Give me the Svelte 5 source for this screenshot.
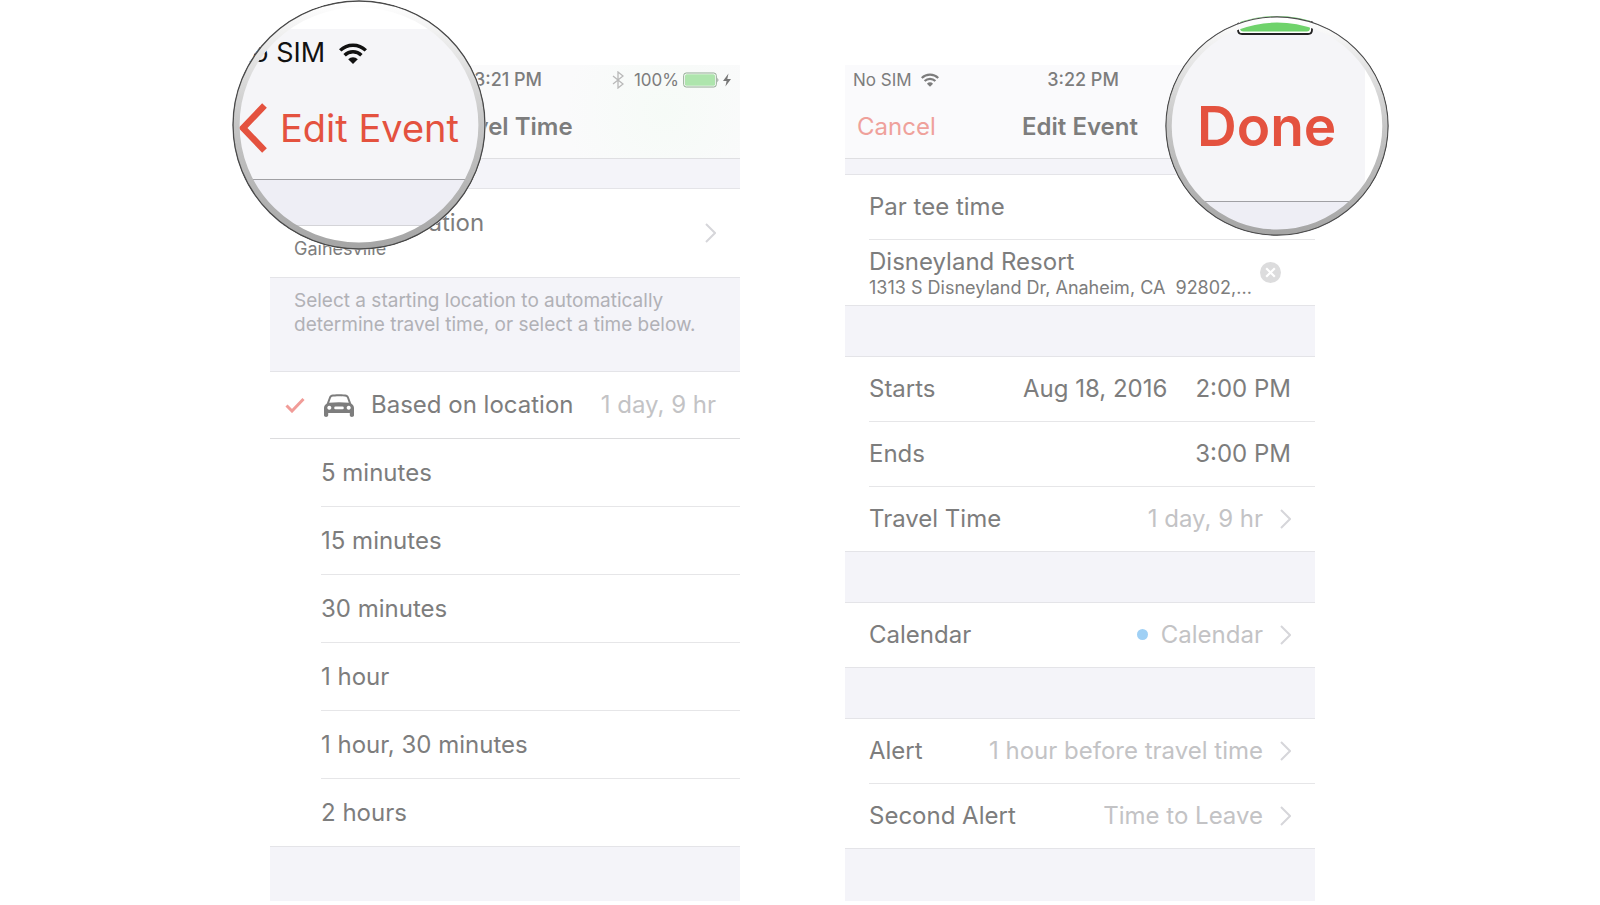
<script lang="ts">
	const durations = [
		'5 minutes',
		'15 minutes',
		'30 minutes',
		'1 hour',
		'1 hour, 30 minutes',
		'2 hours'
	];

	const alerts = [
		{ label: 'Alert', value: '1 hour before travel time' },
		{ label: 'Second Alert', value: 'Time to Leave' }
	];

	let travelTime = 'location';
	let title = 'Par tee time';
</script>

{#snippet chevron()}
	<svg class="chevron" viewBox="0 0 11 20" aria-hidden="true">
		<path d="M1 1l9 9-9 9" fill="none" stroke="currentColor" stroke-width="2" />
	</svg>
{/snippet}

{#snippet wifi()}
	<svg class="wifi" viewBox="0 0 28 21" aria-hidden="true">
		<g fill="none" stroke="currentColor" stroke-width="3.4">
			<path d="M1.2 7.4a18.4 18.4 0 0 1 25.6 0" />
			<path d="M5.6 12.2a12 12 0 0 1 16.8 0" />
		</g>
		<path d="M9.2 16.2a7 7 0 0 1 9.6 0L14 21z" fill="currentColor" />
	</svg>
{/snippet}

{#snippet tick()}
	<svg class="tick" viewBox="0 0 20 16" aria-hidden="true">
		<path d="M1.5 8.5l5.5 5.5L18.5 2" fill="none" stroke="currentColor" stroke-width="3" />
	</svg>
{/snippet}

{#snippet ring(id: string)}
	<svg class="ring" viewBox="0 0 250 250" preserveAspectRatio="none" aria-hidden="true">
		<defs>
			<linearGradient {id} x1="0" y1="0" x2="0" y2="1">
				<stop offset="0" stop-color="#fff" />
				<stop offset="0.15" stop-color="#ececec" />
				<stop offset="0.5" stop-color="#c6c6c6" />
				<stop offset="1" stop-color="#a6a6a6" />
			</linearGradient>
		</defs>
		<ellipse cx="125" cy="125" rx="121" ry="121" fill="none" stroke="url(#{id})" stroke-width="7" />
		<ellipse cx="125" cy="125" rx="124" ry="124" fill="none" stroke="#4a4a4a" stroke-width="1.3" />
	</svg>
{/snippet}

<main class="stage">
	<section class="phone" aria-label="Travel Time">
		<header class="tinted">
			<div class="status">
				<span class="time">3:21 PM</span>
				<span class="battery">
					<svg class="bluetooth" viewBox="0 0 12 18" aria-hidden="true">
						<path
							d="M1 5l10 8-5 4V1l5 4-10 8"
							fill="none"
							stroke="currentColor"
							stroke-width="1.3"
						/>
					</svg>
					<span>100%</span>
					<svg class="cell" viewBox="0 0 49 16" aria-hidden="true">
						<rect x="0.7" y="1" width="32.6" height="14" rx="2.5" fill="#fff" stroke="#8fa890" stroke-width="1" />
						<rect x="2" y="2.3" width="30" height="11.4" rx="1.5" fill="#aee5ad" />
						<path d="M34.5 5.5q1.8 2.5 0 5z" fill="#777" />
						<path d="M45.5 1.5L40 9h3.6l-1.2 5.5L48 7h-3.7z" fill="#777" />
					</svg>
				</span>
			</div>
			<div class="nav">
				<h1>Travel Time</h1>
			</div>
		</header>

		<div class="gap short"></div>
		<button class="row place">
			<span class="lines">
				<span>Current Location</span>
				<small>Gainesville</small>
			</span>
			{@render chevron()}
		</button>

		<p class="gap note">
			Select a starting location to automatically determine travel time, or select a time below.
		</p>

		<div class="options" role="radiogroup" aria-label="Travel time">
			<label class="option based">
				<input type="radio" name="travel" value="location" bind:group={travelTime} />
				<span class="mark">{@render tick()}</span>
				<span class="choice">
					<svg class="car" viewBox="0 0 30 23" aria-hidden="true">
						<path
							fill="currentColor"
							fill-rule="evenodd"
							d="M7.5.8C10 0 20 0 22.500.8c1.300.4 2 1.400 2.500 2.700l2.200 6C29 10.800 30 12 30 14v7.200c0 2.300-4.200 2.300-4.200 0V19H4.200v2.200c0 2.300-4.200 2.300-4.200 0V14c0-2 1-3.200 2.800-4.500l2.200-6C5.500 2.200 6.200 1.200 7.500.8zM8 2.800c-.6.2-.9.700-1.200 1.500L5.200 8.800c6-.9 13.600-.9 19.600 0l-1.600-4.500c-.3-.8-.6-1.300-1.200-1.500-3-.7-11-.7-14 0zM5.300 11.800a2 2 0 1 0 .01 0zM24.700 11.800a2 2 0 1 0 .01 0zM11.500 12.600a1.200 1.200 0 0 0 0 2.600h7a1.200 1.200 0 0 0 0-2.600z"
						/>
					</svg>
					<span class="name">Based on location</span>
					<span class="value">1 day, 9 hr</span>
				</span>
			</label>
			{#each durations as duration}
				<label class="option">
					<input type="radio" name="travel" value={duration} bind:group={travelTime} />
					<span class="mark">{@render tick()}</span>
					<span class="choice">{duration}</span>
				</label>
			{/each}
		</div>
		<div class="gap rest"></div>

		<div class="lens lens-back">
			<div class="lens-bar">
				<div class="lens-status">No SIM {@render wifi()}</div>
				<button class="back">
					<svg viewBox="0 0 28 50" aria-hidden="true">
						<path d="M25.500 2.500L4 25l21.500 22.500" fill="none" stroke="currentColor" stroke-width="6.500" />
					</svg>
					Edit Event
				</button>
			</div>
			<div class="lens-gap"></div>
			{@render ring('ring-back')}
		</div>
	</section>

	<section class="phone" aria-label="Edit Event">
		<header>
			<div class="status">
				<span class="carrier">No SIM {@render wifi()}</span>
				<span class="time">3:22 PM</span>
			</div>
			<div class="nav">
				<button class="cancel">Cancel</button>
				<h1>Edit Event</h1>
			</div>
		</header>

		<div class="gap thin"></div>
		<div class="group">
			<div class="row">
				<input class="title" type="text" aria-label="Title" bind:value={title} />
			</div>
			<div class="row address">
				<span class="lines">
					<span>Disneyland Resort</span>
					<small>1313 S Disneyland Dr, Anaheim, CA&nbsp; 92802,...</small>
				</span>
				<button class="clear" aria-label="Clear location">
					<svg viewBox="0 0 21 21" aria-hidden="true">
						<circle cx="10.500" cy="10.500" r="10.500" fill="#dcdcdd" />
						<path d="M6.200 6.200l8.600 8.600m0-8.600l-8.600 8.600" stroke="#fff" stroke-width="2.200" />
					</svg>
				</button>
			</div>
		</div>

		<div class="gap"></div>
		<div class="group">
			<button class="row">
				<span class="name">Starts</span>
				<span class="date">Aug 18, 2016</span>
				<span>2:00 PM</span>
			</button>
			<button class="row">
				<span class="name">Ends</span>
				<span>3:00 PM</span>
			</button>
			<button class="row">
				<span class="name">Travel Time</span>
				<span class="value">1 day, 9 hr</span>
				{@render chevron()}
			</button>
		</div>

		<div class="gap"></div>
		<div class="group">
			<button class="row">
				<span class="name">Calendar</span>
				<span class="value"><i class="dot"></i>Calendar</span>
				{@render chevron()}
			</button>
		</div>

		<div class="gap"></div>
		<div class="group">
			{#each alerts as alert}
				<button class="row">
					<span class="name">{alert.label}</span>
					<span class="value">{alert.value}</span>
					{@render chevron()}
				</button>
			{/each}
		</div>
		<div class="gap rest"></div>

		<div class="lens lens-done">
			<div class="lens-bar">
				<svg class="lens-battery" viewBox="0 0 76 20" aria-hidden="true">
					<path d="M1 0v14q0 4 4 4h66q4 0 4-4V0" fill="#fff" stroke="#222" stroke-width="1.800" />
					<path d="M3 0v12q0 3.500 3.500 3.500h63q3.500 0 3.500-3.500V0z" fill="#6fd36b" />
				</svg>
				<button class="done">Done</button>
			</div>
			<div class="lens-gap"></div>
			{@render ring('ring-done')}
		</div>
	</section>
</main>

<style>
	:global(body) {
		margin: 0;
		background: #fff;
	}

	.stage {
		display: flex;
		justify-content: center;
		gap: 105px;
		box-sizing: border-box;
		min-height: 100vh;
		padding: 65px 15px 4px 0;
		font-family: Inter, 'Liberation Sans', sans-serif;
		font-size: 24px;
		line-height: 30px;
		color: #7d7d7d;
	}

	.stage *,
	.stage *::before {
		box-sizing: border-box;
	}

	button,
	input {
		margin: 0;
		padding: 0;
		border: 0;
		background: none;
		color: inherit;
		font: inherit;
		text-align: left;
	}

	button {
		cursor: pointer;
	}

	svg {
		display: block;
		flex-shrink: 0;
	}

	.phone {
		position: relative;
		display: flex;
		flex-direction: column;
		flex: 0 1 470px;
		min-width: 0;
	}

	header {
		background: #fafafc;
		border-bottom: 1px solid #dfdfe2;
	}

	.tinted {
		background: radial-gradient(circle at 84% 50%, #f6fbf7, #fafafb 100px);
	}

	.status,
	.nav {
		display: grid;
		grid-template-columns: 1fr auto 1fr;
		align-items: center;
	}

	.status {
		height: 30px;
		padding: 0 8px;
		font-size: 17px;
	}

	.time {
		grid-column: 2;
		padding-left: 6px;
		font-size: 18px;
		font-weight: 500;
	}

	.carrier,
	.battery {
		display: flex;
		align-items: center;
	}

	.carrier {
		gap: 9px;
	}

	.carrier :global(.wifi) {
		width: 18px;
		height: 14px;
	}

	.battery {
		justify-content: flex-end;
		gap: 4px;
	}

	.bluetooth {
		width: 12px;
		height: 18px;
		margin-right: 6px;
		color: #b9b9b9;
	}

	.cell {
		width: 49px;
		height: 16px;
	}

	.nav {
		height: 63px;
		padding: 0 12px;
	}

	h1 {
		grid-column: 2;
		margin: 0;
		font-size: 24px;
		font-weight: 600;
	}

	.cancel {
		justify-self: start;
		color: #efa19b;
	}

	.gap {
		height: 52px;
		margin: 0;
		background: #f4f4f9;
		border: solid #e4e4e8;
		border-width: 1px 0;
	}

	.thin {
		height: 16px;
		border-top: 0;
	}

	.short {
		height: 30px;
		border-top: 0;
	}

	.rest {
		flex: 1;
		min-height: 52px;
		border-bottom: 0;
	}

	.note {
		height: auto;
		min-height: 95px;
		padding: 11px 24px;
		font-size: 19px;
		line-height: 24px;
		color: #b1b1b6;
	}

	.row {
		position: relative;
		display: flex;
		align-items: center;
		width: 100%;
		min-height: 64px;
		padding: 0 24px;
	}

	.row + .row {
		min-height: 65px;
	}

	.row + .row::before {
		content: '';
		position: absolute;
		top: 0;
		left: 24px;
		right: 0;
		height: 1px;
		background: #e6e6e8;
	}

	.place {
		min-height: 88px;
	}

	.row.address {
		min-height: 66px;
		padding-right: 34px;
	}

	.lines {
		display: flex;
		flex: 1;
		flex-direction: column;
		min-width: 0;
		padding-top: 2px;
	}

	small {
		font-size: 18px;
		line-height: 22px;
		white-space: nowrap;
	}

	.title {
		width: 100%;
		outline: 0;
	}

	.clear svg {
		width: 21px;
		height: 21px;
	}

	.name {
		flex: 1;
	}

	.date {
		margin-right: 28px;
	}

	.value {
		color: #c3c3c5;
	}

	.chevron {
		width: 11px;
		height: 20px;
		margin-left: 17px;
		color: #d6d6da;
	}

	.dot {
		display: inline-block;
		width: 11px;
		height: 11px;
		margin-right: 13px;
		border-radius: 50%;
		background: #9fd0f5;
		vertical-align: 3px;
	}

	.option {
		position: relative;
		display: flex;
		height: 68px;
		padding-left: 15px;
		cursor: pointer;
	}

	.option input {
		position: absolute;
		opacity: 0;
	}

	.mark {
		display: flex;
		align-items: center;
		width: 36px;
		color: #f19c98;
		visibility: hidden;
	}

	input:checked + .mark {
		visibility: visible;
	}

	.tick {
		width: 20px;
		height: 16px;
	}

	.choice {
		display: flex;
		flex: 1;
		align-items: center;
		padding-right: 24px;
		border-top: 1px solid #e6e6e8;
	}

	.based {
		height: 66px;
	}

	.based .choice {
		border-top: 0;
	}

	.based + .option {
		border-top: 1px solid #dcdcde;
	}

	.based + .option .choice {
		border-top: 0;
	}

	.car {
		width: 30px;
		height: 23px;
		margin: 0 17px 0 3px;
	}

	/* magnifiers float over the corner of each phone */
	.lens {
		position: absolute;
		overflow: hidden;
		border-radius: 50%;
		background: #fff;
	}

	.lens-back {
		top: -65px;
		left: -38px;
		width: 254px;
		height: 250px;
		padding-top: 29px;
	}

	.lens-done {
		top: -49px;
		right: -74px;
		width: 224px;
		height: 220px;
	}

	.lens-bar {
		background: #f5f5f8;
		border-bottom: 1px solid #a0a0a4;
	}

	.lens-back .lens-bar {
		height: 151px;
	}

	.lens-done .lens-bar,
	.lens-done .lens-gap {
		width: 200px;
	}

	.lens-done .lens-bar {
		height: 186px;
	}

	.lens-gap {
		height: 46px;
		background: #eeeef5;
		border-bottom: 1px solid #d4d4d8;
	}

	.lens-status {
		display: flex;
		align-items: center;
		gap: 14px;
		height: 48px;
		font-size: 27px;
		color: #111;
	}

	.lens-status :global(.wifi) {
		width: 28px;
		height: 21px;
	}

	.back {
		display: flex;
		align-items: center;
		gap: 13px;
		height: 102px;
		padding-left: 7px;
		font-size: 38px;
		color: #e4523f;
		white-space: nowrap;
	}

	.back svg {
		width: 28px;
		height: 50px;
	}

	.lens-battery {
		width: 76px;
		height: 20px;
		margin-left: 72px;
	}

	.done {
		display: block;
		height: 180px;
		padding-left: 32px;
		font-size: 55px;
		font-weight: 600;
		color: #e4523f;
	}

	.ring {
		position: absolute;
		inset: 0;
		width: 100%;
		height: 100%;
	}
</style>
